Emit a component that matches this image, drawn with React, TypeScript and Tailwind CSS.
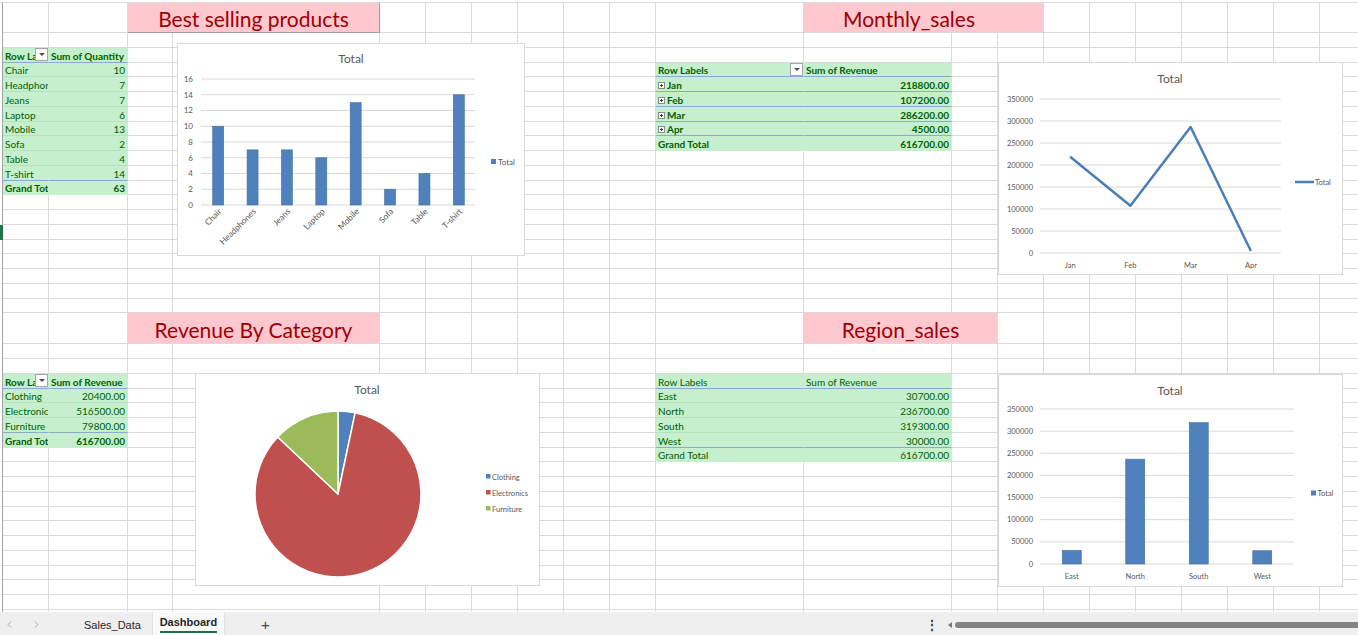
import React from "react";
import { ChevronLeft, ChevronRight } from "lucide-react";

type Cell = { span?: number; w?: string; cls: string; node?: React.ReactNode };

const COLW = [
  "w-[46px]", "w-[79px]", "w-[45px]", "w-[207px]",
  "w-[46px]", "w-[46px]", "w-[46px]", "w-[46px]", "w-[46px]", "w-[46px]",
  "w-[148px]", "w-[148px]",
  "w-[46px]", "w-[46px]", "w-[46px]", "w-[46px]", "w-[46px]", "w-[46px]", "w-[46px]", "w-[46px]", "w-[46px]",
];

const SVGFONT = "Lato, 'Liberation Sans', sans-serif";

const P =
  "bg-[#c6efce] text-[#006100] border-r border-r-[#c6efce] border-b flex items-center whitespace-nowrap overflow-hidden px-[2px] pt-[3px]";
const LF = "border-b-[#b9e0c2]";
const LS = "border-b-[#8eaacb]";
const LN = "border-b-[#c6efce]";
const T = "bg-[#ffc7ce] text-[#9c0006] text-[21px] flex items-center whitespace-nowrap overflow-hidden pt-[2px]";

function DD() {
  return (
    <span className="shrink-0 w-[13px] h-[13px] -mt-[3px] border border-[#a6a6a6] bg-white flex items-center justify-center">
      <span className="w-0 h-0 border-l-[3px] border-r-[3px] border-t-[3px] border-l-transparent border-r-transparent border-t-[#505050]" />
    </span>
  );
}

function EX() {
  return (
    <svg width="7" height="7" viewBox="0 0 7 7" className="shrink-0 mr-[2px]">
      <rect x="0.5" y="0.5" width="6" height="6" fill="#ffffff" stroke="#8c8c8c" />
      <path d="M2 3.5h3M3.5 2v3" stroke="#404040" strokeWidth="1" />
    </svg>
  );
}

const CELLS: Record<string, Cell> = {};
function put(r: number, c: number, cell: Cell) {
  CELLS[`${r}-${c}`] = cell;
}

// Titles
put(1, 2, { span: 2, w: "w-[252px]", cls: `${T} justify-center border-r border-b border-[#9f9f9f]`, node: "Best selling products" });
put(1, 11, { span: 3, w: "w-[240px]", cls: `${T} justify-start pl-[39px] border-r border-b border-[#dadada]`, node: "Monthly_sales" });
put(21, 2, { span: 2, w: "w-[252px]", cls: `${T} justify-center border-r border-b border-[#dadada]`, node: "Revenue By Category" });
put(21, 11, { span: 2, w: "w-[194px]", cls: `${T} justify-center border-r border-b border-[#dadada]`, node: "Region_sales" });

// Best selling products pivot
put(3, 0, {
  cls: `${P} ${LS} pr-0 font-bold`,
  node: (
    <>
      <span className="flex-1 min-w-0 overflow-hidden">Row Labels</span>
      <DD />
    </>
  ),
});
put(3, 1, { cls: `${P} ${LS} font-bold`, node: "Sum of Quantity" });
const products: [string, number][] = [
  ["Chair", 10], ["Headphones", 7], ["Jeans", 7], ["Laptop", 6],
  ["Mobile", 13], ["Sofa", 2], ["Table", 4], ["T-shirt", 14],
];
products.forEach(([n, v], i) => {
  const line = i === products.length - 1 ? LS : LF;
  put(4 + i, 0, { cls: `${P} ${line}`, node: n });
  put(4 + i, 1, { cls: `${P} ${line} justify-end`, node: String(v) });
});
put(12, 0, { cls: `${P} ${LN} font-bold`, node: "Grand Total" });
put(12, 1, { cls: `${P} ${LN} font-bold justify-end`, node: "63" });

// Monthly pivot
put(4, 10, {
  cls: `${P} ${LS} pr-0 font-bold`,
  node: (
    <>
      <span className="flex-1 min-w-0 overflow-hidden">Row Labels</span>
      <DD />
    </>
  ),
});
put(4, 11, { cls: `${P} ${LS} font-bold`, node: "Sum of Revenue" });
const months: [string, string][] = [
  ["Jan", "218800.00"], ["Feb", "107200.00"], ["Mar", "286200.00"], ["Apr", "4500.00"],
];
months.forEach(([m, v], i) => {
  put(5 + i, 10, { cls: `${P} ${LS} font-bold`, node: (<><EX />{m}</>) });
  put(5 + i, 11, { cls: `${P} ${LS} font-bold justify-end`, node: v });
});
put(9, 10, { cls: `${P} ${LN} font-bold`, node: "Grand Total" });
put(9, 11, { cls: `${P} ${LN} font-bold justify-end`, node: "616700.00" });

// Revenue by category pivot
put(24, 0, {
  cls: `${P} ${LS} pr-0 font-bold`,
  node: (
    <>
      <span className="flex-1 min-w-0 overflow-hidden">Row Labels</span>
      <DD />
    </>
  ),
});
put(24, 1, { cls: `${P} ${LS} font-bold`, node: "Sum of Revenue" });
const cats: [string, string][] = [
  ["Clothing", "20400.00"], ["Electronics", "516500.00"], ["Furniture", "79800.00"],
];
cats.forEach(([n, v], i) => {
  const line = i === cats.length - 1 ? LS : LF;
  put(25 + i, 0, { cls: `${P} ${line}`, node: n });
  put(25 + i, 1, { cls: `${P} ${line} justify-end`, node: v });
});
put(28, 0, { cls: `${P} ${LN} font-bold`, node: "Grand Total" });
put(28, 1, { cls: `${P} ${LN} font-bold justify-end`, node: "616700.00" });

// Region pivot
put(24, 10, { cls: `${P} ${LS}`, node: "Row Labels" });
put(24, 11, { cls: `${P} ${LS}`, node: "Sum of Revenue" });
const regions: [string, string][] = [
  ["East", "30700.00"], ["North", "236700.00"], ["South", "319300.00"], ["West", "30000.00"],
];
regions.forEach(([n, v], i) => {
  const line = i === regions.length - 1 ? LS : LF;
  put(25 + i, 10, { cls: `${P} ${line}`, node: n });
  put(25 + i, 11, { cls: `${P} ${line} justify-end`, node: v });
});
put(29, 10, { cls: `${P} ${LN}`, node: "Grand Total" });
put(29, 11, { cls: `${P} ${LN} justify-end`, node: "616700.00" });

function Row({ r }: { r: number }) {
  const out: React.ReactNode[] = [];
  for (let c = 0; c < COLW.length; c++) {
    const cell = CELLS[`${r}-${c}`];
    if (cell) {
      out.push(
        <div key={c} className={`shrink-0 h-full ${cell.w ?? COLW[c]} ${cell.cls}`}>
          {cell.node}
        </div>
      );
      c += (cell.span ?? 1) - 1;
    } else {
      out.push(<div key={c} className={`shrink-0 h-full ${COLW[c]} border-r border-b border-[#dadada]`} />);
    }
  }
  const h = r === 1 ? "h-[30px]" : r === 21 ? "h-[31px]" : "h-[14.75px]";
  return (
    <div className={`flex shrink-0 ${h}`}>
      <div className={`shrink-0 w-[3px] h-full ${r === 15 ? "bg-[#217346]" : "border-r border-[#a3a3a3]"}`} />
      {out}
    </div>
  );
}

function ChartBox({ cls, children }: { cls: string; children: React.ReactNode }) {
  return <div className={`absolute bg-white border border-[#d9d9d9] ${cls}`}>{children}</div>;
}

function BestSellingChart() {
  const y0 = 161;
  const k = 7.875;
  const left = 23;
  const step = 34.375;
  return (
    <ChartBox cls="left-[177px] top-[43px] w-[348px] h-[213px]">
      <svg width="346" height="211" fontFamily={SVGFONT}>
        <text x="173" y="19" textAnchor="middle" fontSize="12" fill="#595959">Total</text>
        {[0, 2, 4, 6, 8, 10, 12, 14, 16].map((v) => (
          <g key={v}>
            <line x1={left} x2="297" y1={y0 - v * k} y2={y0 - v * k} stroke="#d9d9d9" strokeWidth="1" />
            <text x="15" y={y0 - v * k + 2.8} textAnchor="end" fontSize="8" fill="#595959">{v}</text>
          </g>
        ))}
        {products.map(([n, v], i) => {
          const cx = left + step * (i + 0.5);
          return (
            <g key={n}>
              <rect x={cx - 5.5} y={y0 - v * k} width="11" height={v * k} fill="#4f81bd" stroke="#41719c" strokeWidth="0.6" />
              <text
                x={cx + 4}
                y={y0 + 7}
                textAnchor="end"
                fontSize="8.5"
                fill="#595959"
                transform={`rotate(-45 ${cx + 4} ${y0 + 7})`}
              >
                {n}
              </text>
            </g>
          );
        })}
        <rect x="313" y="115" width="5" height="5" fill="#4f81bd" />
        <text x="320" y="121" fontSize="8" fill="#595959">Total</text>
      </svg>
    </ChartBox>
  );
}

function MonthlyChart() {
  const y0 = 190;
  const k = 154 / 350000;
  const left = 41;
  const step = 60.25;
  const vals = [218800, 107200, 286200, 4500];
  const pts = vals.map((v, i) => `${left + step * (i + 0.5)},${y0 - v * k}`).join(" ");
  return (
    <ChartBox cls="left-[998px] top-[62px] w-[345px] h-[213px]">
      <svg width="343" height="211" fontFamily={SVGFONT}>
        <text x="171" y="20" textAnchor="middle" fontSize="12" fill="#595959">Total</text>
        {[0, 50000, 100000, 150000, 200000, 250000, 300000, 350000].map((v) => (
          <g key={v}>
            <line x1={left} x2="282" y1={y0 - v * k} y2={y0 - v * k} stroke="#d9d9d9" strokeWidth="1" />
            <text x="34" y={y0 - v * k + 2.6} textAnchor="end" fontSize="7.5" fill="#595959">{v}</text>
          </g>
        ))}
        <polyline points={pts} fill="none" stroke="#4a7ebb" strokeWidth="2.5" strokeLinejoin="round" />
        {["Jan", "Feb", "Mar", "Apr"].map((m, i) => (
          <text key={m} x={left + step * (i + 0.5)} y="205" textAnchor="middle" fontSize="7.5" fill="#595959">{m}</text>
        ))}
        <line x1="296" x2="315" y1="119" y2="119" stroke="#4a7ebb" strokeWidth="2.5" />
        <text x="316" y="121.5" fontSize="7.5" fill="#595959">Total</text>
      </svg>
    </ChartBox>
  );
}

function PieChart() {
  const cx = 142;
  const cy = 120;
  const r = 83;
  const vals = [20400, 516500, 79800];
  const colors = ["#4f81bd", "#c0504d", "#9bbb59"];
  const total = vals.reduce((a, b) => a + b, 0);
  let a = 0;
  const slices = vals.map((v, i) => {
    const a0 = a;
    const a1 = a + (v / total) * Math.PI * 2;
    a = a1;
    const x0 = cx + r * Math.sin(a0);
    const y0 = cy - r * Math.cos(a0);
    const x1 = cx + r * Math.sin(a1);
    const y1 = cy - r * Math.cos(a1);
    const large = a1 - a0 > Math.PI ? 1 : 0;
    return (
      <path
        key={i}
        d={`M${cx},${cy} L${x0},${y0} A${r},${r} 0 ${large} 1 ${x1},${y1} Z`}
        fill={colors[i]}
        stroke="#ffffff"
        strokeWidth="1.5"
        strokeLinejoin="round"
      />
    );
  });
  return (
    <ChartBox cls="left-[195px] top-[373px] w-[345px] h-[213px]">
      <svg width="343" height="211" fontFamily={SVGFONT}>
        <text x="171" y="20" textAnchor="middle" fontSize="12" fill="#595959">Total</text>
        {slices}
        {["Clothing", "Electronics", "Furniture"].map((n, i) => (
          <g key={n}>
            <rect x="290" y={100 + i * 16} width="4.5" height="4.5" fill={colors[i]} />
            <text x="296" y={105.5 + i * 16} fontSize="7.5" fill="#595959">{n}</text>
          </g>
        ))}
      </svg>
    </ChartBox>
  );
}

function RegionChart() {
  const y0 = 189;
  const k = 155 / 350000;
  const left = 41;
  const step = 63.5;
  const vals = [30700, 236700, 319300, 30000];
  const names = ["East", "North", "South", "West"];
  return (
    <ChartBox cls="left-[998px] top-[374px] w-[345px] h-[213px]">
      <svg width="343" height="211" fontFamily={SVGFONT}>
        <text x="171" y="20" textAnchor="middle" fontSize="12" fill="#595959">Total</text>
        {[0, 50000, 100000, 150000, 200000, 250000, 300000, 350000].map((v) => (
          <g key={v}>
            <line x1={left} x2="295" y1={y0 - v * k} y2={y0 - v * k} stroke="#d9d9d9" strokeWidth="1" />
            <text x="34" y={y0 - v * k + 2.6} textAnchor="end" fontSize="7.5" fill="#595959">{v}</text>
          </g>
        ))}
        {vals.map((v, i) => {
          const cx = left + step * (i + 0.5);
          return (
            <g key={i}>
              <rect x={cx - 9.5} y={y0 - v * k} width="19" height={v * k} fill="#4f81bd" stroke="#41719c" strokeWidth="0.6" />
              <text x={cx} y="204" textAnchor="middle" fontSize="7.5" fill="#595959">{names[i]}</text>
            </g>
          );
        })}
        <rect x="312" y="115.5" width="5" height="5" fill="#4f81bd" />
        <text x="318.5" y="121" fontSize="7.5" fill="#595959">Total</text>
      </svg>
    </ChartBox>
  );
}

export default function App() {
  const rows = Array.from({ length: 40 }, (_, i) => i + 1);
  return (
    <div className="relative w-[1358px] h-[635px] overflow-hidden bg-white flex flex-col font-['Lato','Liberation_Sans',sans-serif] text-[10px]">
      <div className="flex-1 min-h-0 overflow-hidden flex flex-col">
        <div className="shrink-0 h-[3px] w-full border-b border-[#dadada]" />
        {rows.map((r) => (
          <Row key={r} r={r} />
        ))}
      </div>

      <div className="shrink-0 h-[23px] bg-[#efefef] flex items-stretch font-['Liberation_Sans',sans-serif] text-[11px] text-[#262626]">
        <div className="flex items-center pl-[4px] pt-[2px]">
          <ChevronLeft size={11} strokeWidth={1.5} color="#8a8a8a" />
          <ChevronRight size={11} strokeWidth={1.5} color="#8a8a8a" className="ml-[16px]" />
        </div>
        <div className="flex items-center ml-[42px] pt-[3px]">Sales_Data</div>
        <div className="ml-[11px] w-[73px] bg-[#fafafa] flex flex-col items-center justify-end rounded-t-[2px] border-l border-r border-[#e2e2e2]">
          <span className="font-bold leading-none mb-[3px]">Dashboard</span>
          <span className="w-[57px] h-[2px] bg-[#1e7145] mb-[2px]" />
        </div>
        <div className="flex items-center ml-[36px] pt-[2px] text-[15px] text-[#444] leading-none">+</div>
        <div className="flex-1" />
        <div className="w-[432px] flex items-center pt-[2px] overflow-hidden">
          <span className="w-[8px] text-center text-[12px] leading-none text-[#333] font-bold">⋮</span>
          <span className="ml-[14px] w-0 h-0 border-t-[3.5px] border-b-[3.5px] border-r-[4px] border-t-transparent border-b-transparent border-r-[#777]" />
          <span className="ml-[3px] flex-1 h-[6px] rounded-full bg-[#848484] -mr-[6px]" />
        </div>
      </div>

      <BestSellingChart />
      <MonthlyChart />
      <PieChart />
      <RegionChart />
    </div>
  );
}
